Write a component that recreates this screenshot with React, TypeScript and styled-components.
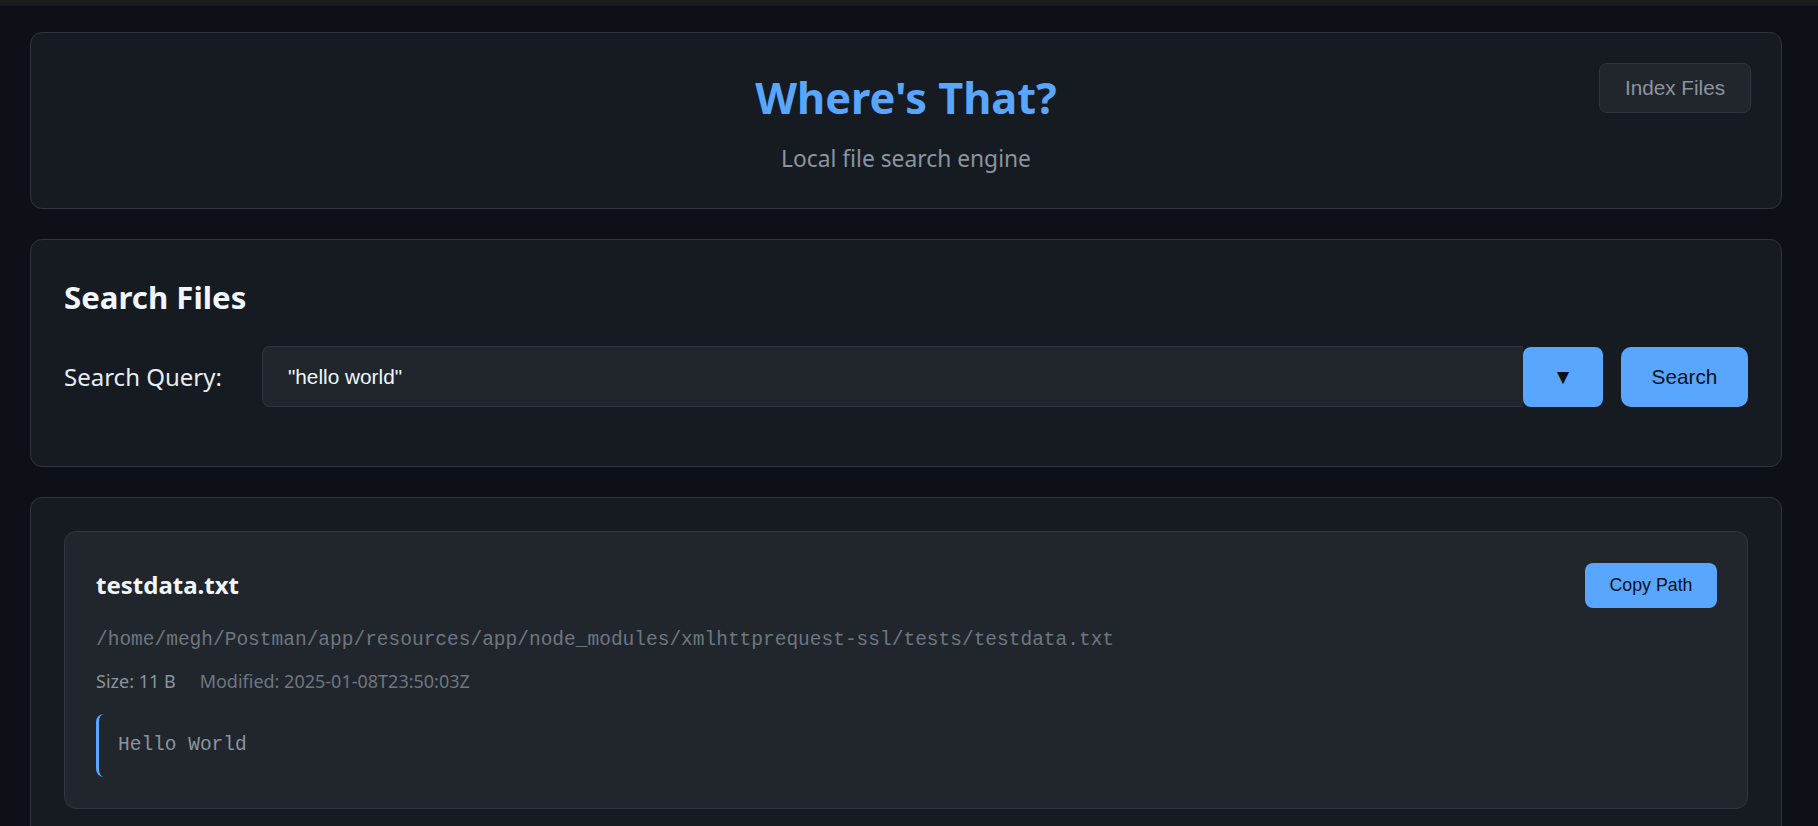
import React from "react";
import styled, { createGlobalStyle } from "styled-components";

const GlobalStyle = createGlobalStyle`
  html, body {
    margin: 0;
    padding: 0;
    background: #0d1117;
    color: #e6edf3;
    font-family: "Noto Sans", sans-serif;
  }
  * { box-sizing: border-box; }
`;

const TopStrip = styled.div`
  height: 6px;
  background: linear-gradient(#1f1f1f, #191919);
`;

const Main = styled.main`
  display: flex;
  flex-direction: column;
  gap: 30px;
  padding: 26px 36px 0 30px;
`;

const Card = styled.section`
  position: relative;
  background: #161b22;
  border: 1px solid #30363d;
  border-radius: 12px;
  padding: 33px;
`;

const HeaderCard = styled(Card)`
  text-align: center;
  padding: 35px 33px 34px;
`;

const Title = styled.h1`
  margin: 0 0 15px;
  font-size: 43.3px;
  line-height: 60px;
  font-weight: 700;
  color: #58a6ff;
`;

const Subtitle = styled.p`
  margin: 0;
  font-size: 22.8px;
  line-height: 31px;
  color: #8b949e;
`;

const GhostButton = styled.button`
  position: absolute;
  top: 30px;
  right: 30px;
  width: 152px;
  height: 50px;
  background: #21262d;
  border: 1px solid #30363d;
  border-radius: 8px;
  color: #8b949e;
  font-family: "Liberation Sans", Arial, sans-serif;
  font-size: 20.7px;
`;

const SearchCard = styled(Card)`
  padding: 35px 33px 35px;
`;

const SectionTitle = styled.h2`
  margin: 0 0 27px;
  font-size: 31.2px;
  line-height: 44px;
  font-weight: 700;
  color: #f0f6fc;
`;

const SearchRow = styled.div`
  display: flex;
  align-items: center;
  margin-bottom: 24px;
`;

const Label = styled.label`
  font-size: 24px;
  line-height: 31px;
  color: #e6edf3;
  margin-right: 40px;
  white-space: nowrap;
`;

const QueryInput = styled.input`
  flex: 1;
  min-width: 0;
  height: 61px;
  padding: 0 25px;
  background: #21262d;
  border: 1px solid #30363d;
  border-right: none;
  border-radius: 8px 0 0 8px;
  color: #f0f6fc;
  font-family: "Liberation Sans", Arial, sans-serif;
  font-size: 20.8px;
  outline: none;
`;

const PrimaryButton = styled.button<{ $w: number; $h: number; $r: number; $ml?: number }>`
  width: ${(p) => p.$w}px;
  height: ${(p) => p.$h}px;
  margin-left: ${(p) => p.$ml ?? 0}px;
  flex-shrink: 0;
  background: #58a6ff;
  border: none;
  border-radius: ${(p) => p.$r}px;
  color: #0d1117;
  font-family: "Liberation Sans", Arial, sans-serif;
  font-size: 20.8px;
  padding: 0;
`;

const SmallPrimary = styled(PrimaryButton)`
  font-size: 17.8px;
`;

const ResultsCard = styled(Card)`
  padding: 33px 33px 40px;
`;

const ResultItem = styled.article`
  background: #21262d;
  border: 1px solid #30363d;
  border-radius: 12px;
  padding: 31px 30px 31px 31px;
`;

const ResultHeader = styled.div`
  display: flex;
  align-items: center;
  justify-content: space-between;
  margin-bottom: 21px;
`;

const FileName = styled.h3`
  margin: 0 0 2px;
  font-size: 24px;
  line-height: 32px;
  font-weight: 700;
  color: #f0f6fc;
`;

const FilePath = styled.div`
  font-family: "Liberation Mono", "Courier New", monospace;
  font-size: 19.5px;
  line-height: 23px;
  color: #6e7681;
  margin-bottom: 17px;
`;

const Meta = styled.div`
  display: flex;
  gap: 24px;
  font-size: 18px;
  line-height: 24px;
  margin-bottom: 21px;
`;

const MetaItem = styled.span<{ $dim?: boolean }>`
  color: ${(p) => (p.$dim ? "#6e7681" : "#8b949e")};
`;

const Snippet = styled.div`
  border-left: 3px solid #58a6ff;
  border-radius: 8px;
  padding: 16px 19px;
  font-family: "Liberation Mono", "Courier New", monospace;
  font-size: 19.5px;
  line-height: 31px;
  color: #8b949e;
`;

export default function App() {
  return (
    <>
      <GlobalStyle />
      <TopStrip />
      <Main>
        <HeaderCard>
          <Title>Where's That?</Title>
          <Subtitle>Local file search engine</Subtitle>
          <GhostButton>Index Files</GhostButton>
        </HeaderCard>

        <SearchCard>
          <SectionTitle>Search Files</SectionTitle>
          <SearchRow>
            <Label htmlFor="q">Search Query:</Label>
            <QueryInput id="q" defaultValue={'"hello world"'} />
            <PrimaryButton $w={80} $h={60} $r={8}>▼</PrimaryButton>
            <PrimaryButton $w={127} $h={60} $r={10} $ml={18}>Search</PrimaryButton>
          </SearchRow>
        </SearchCard>

        <ResultsCard>
          <ResultItem>
            <ResultHeader>
              <FileName>testdata.txt</FileName>
              <SmallPrimary $w={132} $h={45} $r={8}>Copy Path</SmallPrimary>
            </ResultHeader>
            <FilePath>/home/megh/Postman/app/resources/app/node_modules/xmlhttprequest-ssl/tests/testdata.txt</FilePath>
            <Meta>
              <MetaItem>Size: 11 B</MetaItem>
              <MetaItem $dim>Modified: 2025-01-08T23:50:03Z</MetaItem>
            </Meta>
            <Snippet>Hello World</Snippet>
          </ResultItem>
        </ResultsCard>
      </Main>
    </>
  );
}
